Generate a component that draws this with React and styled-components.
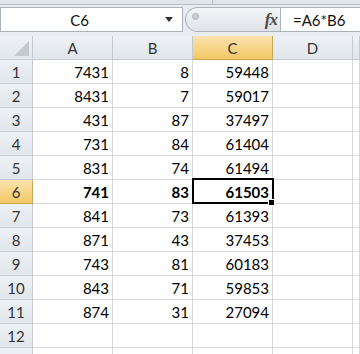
import React from "react";
import styled, { createGlobalStyle, css } from "styled-components";

const GlobalStyle = createGlobalStyle`
  body {
    margin: 0;
    background: #ffffff;
    font-family: Lato, "Open Sans", sans-serif;
  }
`;

const rows = [
  [7431, 8, 59448],
  [8431, 7, 59017],
  [431, 87, 37497],
  [731, 84, 61404],
  [831, 74, 61494],
  [741, 83, 61503],
  [841, 73, 61393],
  [871, 43, 37453],
  [743, 81, 60183],
  [843, 71, 59853],
  [874, 31, 27094],
  ["", "", ""],
];

const columns = ["A", "B", "C", "D"];
const activeRow = 6;
const activeCol = "C";

const Window = styled.div`
  width: 360px;
  height: 354px;
  overflow: hidden;
  background: #ffffff;
`;

const TopStrip = styled.div`
  height: 4px;
  background: #dfe4ea;
  border-bottom: 1px solid #b4bbc4;
  display: flex;
  .divider {
    margin-left: 212px;
    width: 1px;
    background: #b4bbc4;
  }
`;

const FormulaBar = styled.div`
  display: flex;
  align-items: stretch;
  height: 25px;
  padding: 2px 0 4px;
  background: #e9edf1;
`;

const NameBox = styled.div`
  position: relative;
  width: 183px;
  box-sizing: border-box;
  background: #ffffff;
  border: 1px solid #a9b1bb;
  font-size: 15px;
  color: #111;
  display: flex;
  align-items: center;
  justify-content: center;
  padding-right: 24px;
  .arrow {
    position: absolute;
    right: 9px;
    top: 9px;
    width: 0;
    height: 0;
    border-left: 4px solid transparent;
    border-right: 4px solid transparent;
    border-top: 5px solid #333;
  }
`;

const Capsule = styled.div`
  margin-left: 2px;
  width: 95px;
  box-sizing: border-box;
  border: 1px solid #a9b1bb;
  border-right: none;
  border-radius: 13px 0 0 13px;
  background: linear-gradient(#f3f5f7, #dfe3e8);
  display: flex;
  align-items: center;
  justify-content: space-between;
  padding: 0 3px 0 6px;
  .grip {
    width: 5px;
    height: 5px;
    border-radius: 50%;
    background: #c7ccd2;
    border: 1px solid #b0b6bd;
    margin-top: -6px;
  }
  .fx {
    font-family: "Liberation Serif", serif;
    font-style: italic;
    font-weight: 700;
    font-size: 17px;
    color: #4a4a4a;
    letter-spacing: -1px;
  }
`;

const FormulaInput = styled.div`
  flex: 1;
  background: #ffffff;
  border: 1px solid #a9b1bb;
  border-right: none;
  font-size: 15px;
  color: #111;
  display: flex;
  align-items: center;
  padding-left: 12px;
`;

const Sheet = styled.div`
  display: grid;
  grid-template-columns: 33px repeat(4, 80px) 1fr;
  grid-auto-rows: 24px;
  font-size: 15px;
`;

const HeaderCell = styled.div`
  box-sizing: border-box;
  display: flex;
  align-items: center;
  justify-content: center;
  color: #333;
  background: linear-gradient(#eef1f5, #e1e6ec);
  border-right: 1px solid #c5cad2;
  border-bottom: 1px solid #c5cad2;
  ${(p) =>
    p.$active &&
    css`
      background: linear-gradient(#fbe3b0, #f3c863);
      border-right-color: #c9a65a;
      border-bottom-color: #c9a65a;
    `}
`;

const Corner = styled(HeaderCell)`
  position: relative;
  .tri {
    position: absolute;
    right: 3px;
    bottom: 3px;
    width: 0;
    height: 0;
    border-left: 15px solid transparent;
    border-bottom: 15px solid #c4c9cf;
  }
`;

const Cell = styled.div`
  position: relative;
  box-sizing: border-box;
  display: flex;
  align-items: center;
  justify-content: flex-end;
  padding-right: 3px;
  color: #000;
  border-right: 1px solid #d8d8d8;
  border-bottom: 1px solid #d8d8d8;
  font-weight: ${(p) => (p.$bold ? 700 : 400)};
  ${(p) =>
    p.$selected &&
    css`
      &::after {
        content: "";
        position: absolute;
        left: -1px;
        top: -2px;
        right: -2px;
        bottom: -1px;
        border: 2px solid #000;
      }
      &::before {
        content: "";
        position: absolute;
        right: -3px;
        bottom: -3px;
        width: 5px;
        height: 5px;
        background: #000;
        border: 1px solid #fff;
        z-index: 1;
      }
    `}
`;

export default function App() {
  return (
    <Window>
      <GlobalStyle />
      <TopStrip>
        <div className="divider" />
      </TopStrip>
      <FormulaBar>
        <NameBox>
          C6
          <span className="arrow" />
        </NameBox>
        <Capsule>
          <span className="grip" />
          <span className="fx">fx</span>
        </Capsule>
        <FormulaInput>=A6*B6</FormulaInput>
      </FormulaBar>
      <Sheet>
        <Corner>
          <span className="tri" />
        </Corner>
        {columns.map((c) => (
          <HeaderCell key={c} $active={c === activeCol}>
            {c}
          </HeaderCell>
        ))}
        <HeaderCell />
        {rows.map((r, i) => {
          const n = i + 1;
          const isActive = n === activeRow;
          return (
            <React.Fragment key={n}>
              <HeaderCell $active={isActive}>{n}</HeaderCell>
              {r.map((v, j) => (
                <Cell
                  key={j}
                  $bold={isActive}
                  $selected={isActive && columns[j] === activeCol}
                >
                  {v}
                </Cell>
              ))}
              <Cell />
              <Cell />
            </React.Fragment>
          );
        })}
        <HeaderCell />
        <Cell />
        <Cell />
        <Cell />
        <Cell />
        <Cell />
      </Sheet>
    </Window>
  );
}
